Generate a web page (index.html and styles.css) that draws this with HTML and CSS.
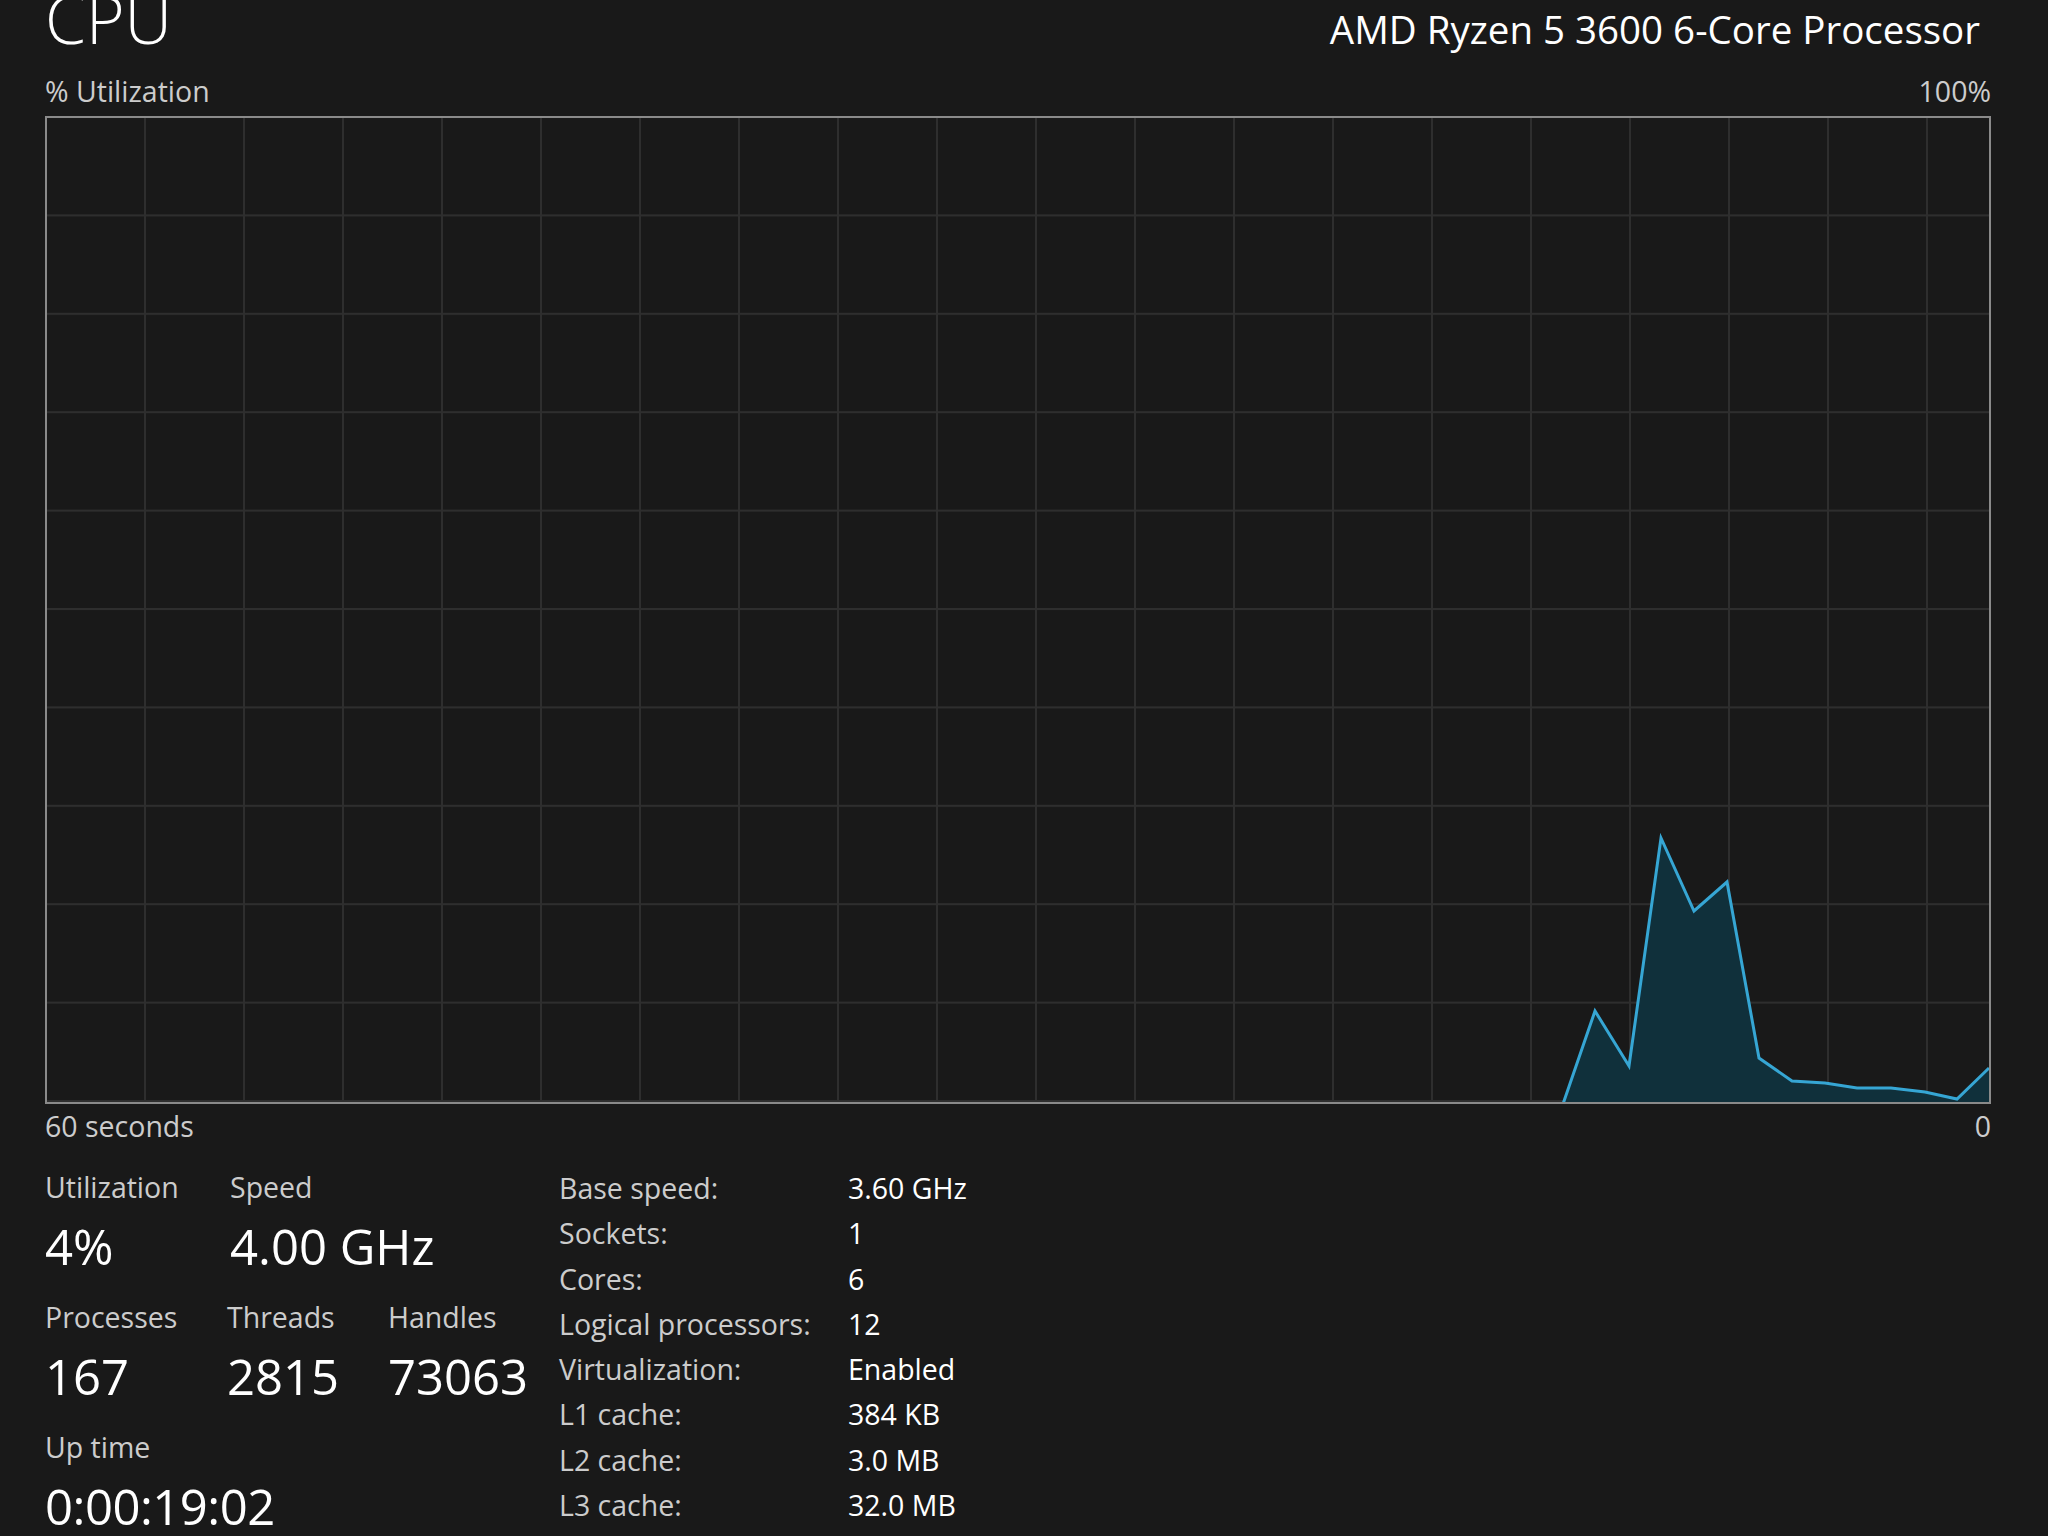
FILE: index.html
```html
<!DOCTYPE html>
<html>
<head>
    <meta charset="UTF-8">
    <title>Task Manager - CPU</title>
    <link rel="stylesheet" href="styles.css">
</head>
<body>
<div class="perf">
    <div class="title-row">
        <h1 class="title">CPU</h1>
        <div class="model">AMD Ryzen 5 3600 6-Core Processor</div>
    </div>

    <div class="axis-row top">
        <span>% Utilization</span>
        <span>100%</span>
    </div>

    <!-- utilization graph, 60 samples across, newest on the right -->
    <div class="chart">
        <svg width="1942" height="984" viewBox="0 0 1942 984">
            <defs>
                <pattern id="grid" width="99" height="98.4" patternUnits="userSpaceOnUse" x="-2" y="-2">
                    <rect x="0" y="0" width="2" height="98.4" fill="#2e2e2e"/>
                    <rect x="0" y="0" width="99" height="2" fill="#2e2e2e"/>
                </pattern>
            </defs>
            <rect x="0" y="0" width="1942" height="984" fill="url(#grid)"/>
            <polygon class="area" points="1516,984 1548,893 1582,948 1614,720 1647,793 1680,764 1712,940 1745,963 1778,965 1810,970 1844,970 1878,974 1910,981 1942,950 1942,984"/>
            <polyline class="line" points="1516,986 1548,893 1582,948 1614,720 1647,793 1680,764 1712,940 1745,963 1778,965 1810,970 1844,970 1878,974 1910,981 1942,950"/>
        </svg>
    </div>

    <div class="axis-row bottom">
        <span>60 seconds</span>
        <span>0</span>
    </div>

    <div class="stats">
        <div class="live">
            <div class="stat-row">
                <div class="stat w185">
                    <div class="stat-label">Utilization</div>
                    <div class="stat-value">4%</div>
                </div>
                <div class="stat">
                    <div class="stat-label">Speed</div>
                    <div class="stat-value">4.00 GHz</div>
                </div>
            </div>
            <div class="stat-row">
                <div class="stat w182">
                    <div class="stat-label">Processes</div>
                    <div class="stat-value">167</div>
                </div>
                <div class="stat w161">
                    <div class="stat-label">Threads</div>
                    <div class="stat-value">2815</div>
                </div>
                <div class="stat">
                    <div class="stat-label">Handles</div>
                    <div class="stat-value">73063</div>
                </div>
            </div>
            <div class="stat-row last">
                <div class="stat">
                    <div class="stat-label">Up time</div>
                    <div class="stat-value uptime">0:00:19:02</div>
                </div>
            </div>
        </div>

        <div class="specs">
            <span class="spec-key">Base speed:</span><span class="spec-val">3.60 GHz</span>
            <span class="spec-key">Sockets:</span><span class="spec-val">1</span>
            <span class="spec-key">Cores:</span><span class="spec-val">6</span>
            <span class="spec-key">Logical processors:</span><span class="spec-val">12</span>
            <span class="spec-key">Virtualization:</span><span class="spec-val">Enabled</span>
            <span class="spec-key">L1 cache:</span><span class="spec-val">384 KB</span>
            <span class="spec-key">L2 cache:</span><span class="spec-val">3.0 MB</span>
            <span class="spec-key">L3 cache:</span><span class="spec-val">32.0 MB</span>
        </div>
    </div>
</div>
</body>
</html>
```

FILE: styles.css
```css
body {
    margin: 0;
    background-color: #191919;
    color: #cccccc;
    font-family: "Open Sans", "Noto Sans", Arial, sans-serif;
}

.perf {
    padding: 1px 57px 0 45px;
}

/* heading: CPU + model name */
.title-row {
    display: flex;
    justify-content: space-between;
    align-items: baseline;
    margin-top: -16px;
}
.title {
    margin: 0;
    font-size: 66px;
    font-weight: 300;
    line-height: 66px;
    color: #ffffff;
}
.model {
    font-size: 38.5px;
    line-height: 40px;
    color: #ffffff;
    margin-right: 11px;
}

.axis-row {
    display: flex;
    justify-content: space-between;
    font-size: 28.5px;
    line-height: 36px;
    color: #cccccc;
}
.axis-row.top {
    margin-top: 22px;
}
.axis-row.bottom {
    margin-top: 4px;
}

.chart {
    margin-top: 7px;
    width: 1942px;
    height: 984px;
    border: 2px solid #8a8a8a;
}
.chart svg {
    display: block;
}
.chart .area {
    fill: #10303b;
}
.chart .line {
    fill: none;
    stroke: #36a6d4;
    stroke-width: 3;
    stroke-linejoin: miter;
}

/* bottom stats */
.stats {
    display: flex;
    margin-top: 25px;
}
.live {
    width: 514px;
}
.stat-row {
    display: flex;
    margin-bottom: 24px;
}
.stat-row.last {
    margin-bottom: 0;
}
.w185 { width: 185px; }
.w182 { width: 182px; }
.w161 { width: 161px; }

.stat-label {
    font-size: 28.5px;
    line-height: 36px;
    color: #cccccc;
}
.stat-value {
    margin-top: 12px;
    font-size: 49px;
    line-height: 58px;
    color: #ffffff;
}
.uptime {
    letter-spacing: -0.5px;
}

.specs {
    display: grid;
    grid-template-columns: 289px auto;
    grid-auto-rows: 45.3px;
    align-content: start;
    font-size: 28.5px;
    line-height: 45.3px;
    margin-top: -3px;
}
.spec-key {
    color: #cccccc;
}
.spec-val {
    color: #ffffff;
}
```
